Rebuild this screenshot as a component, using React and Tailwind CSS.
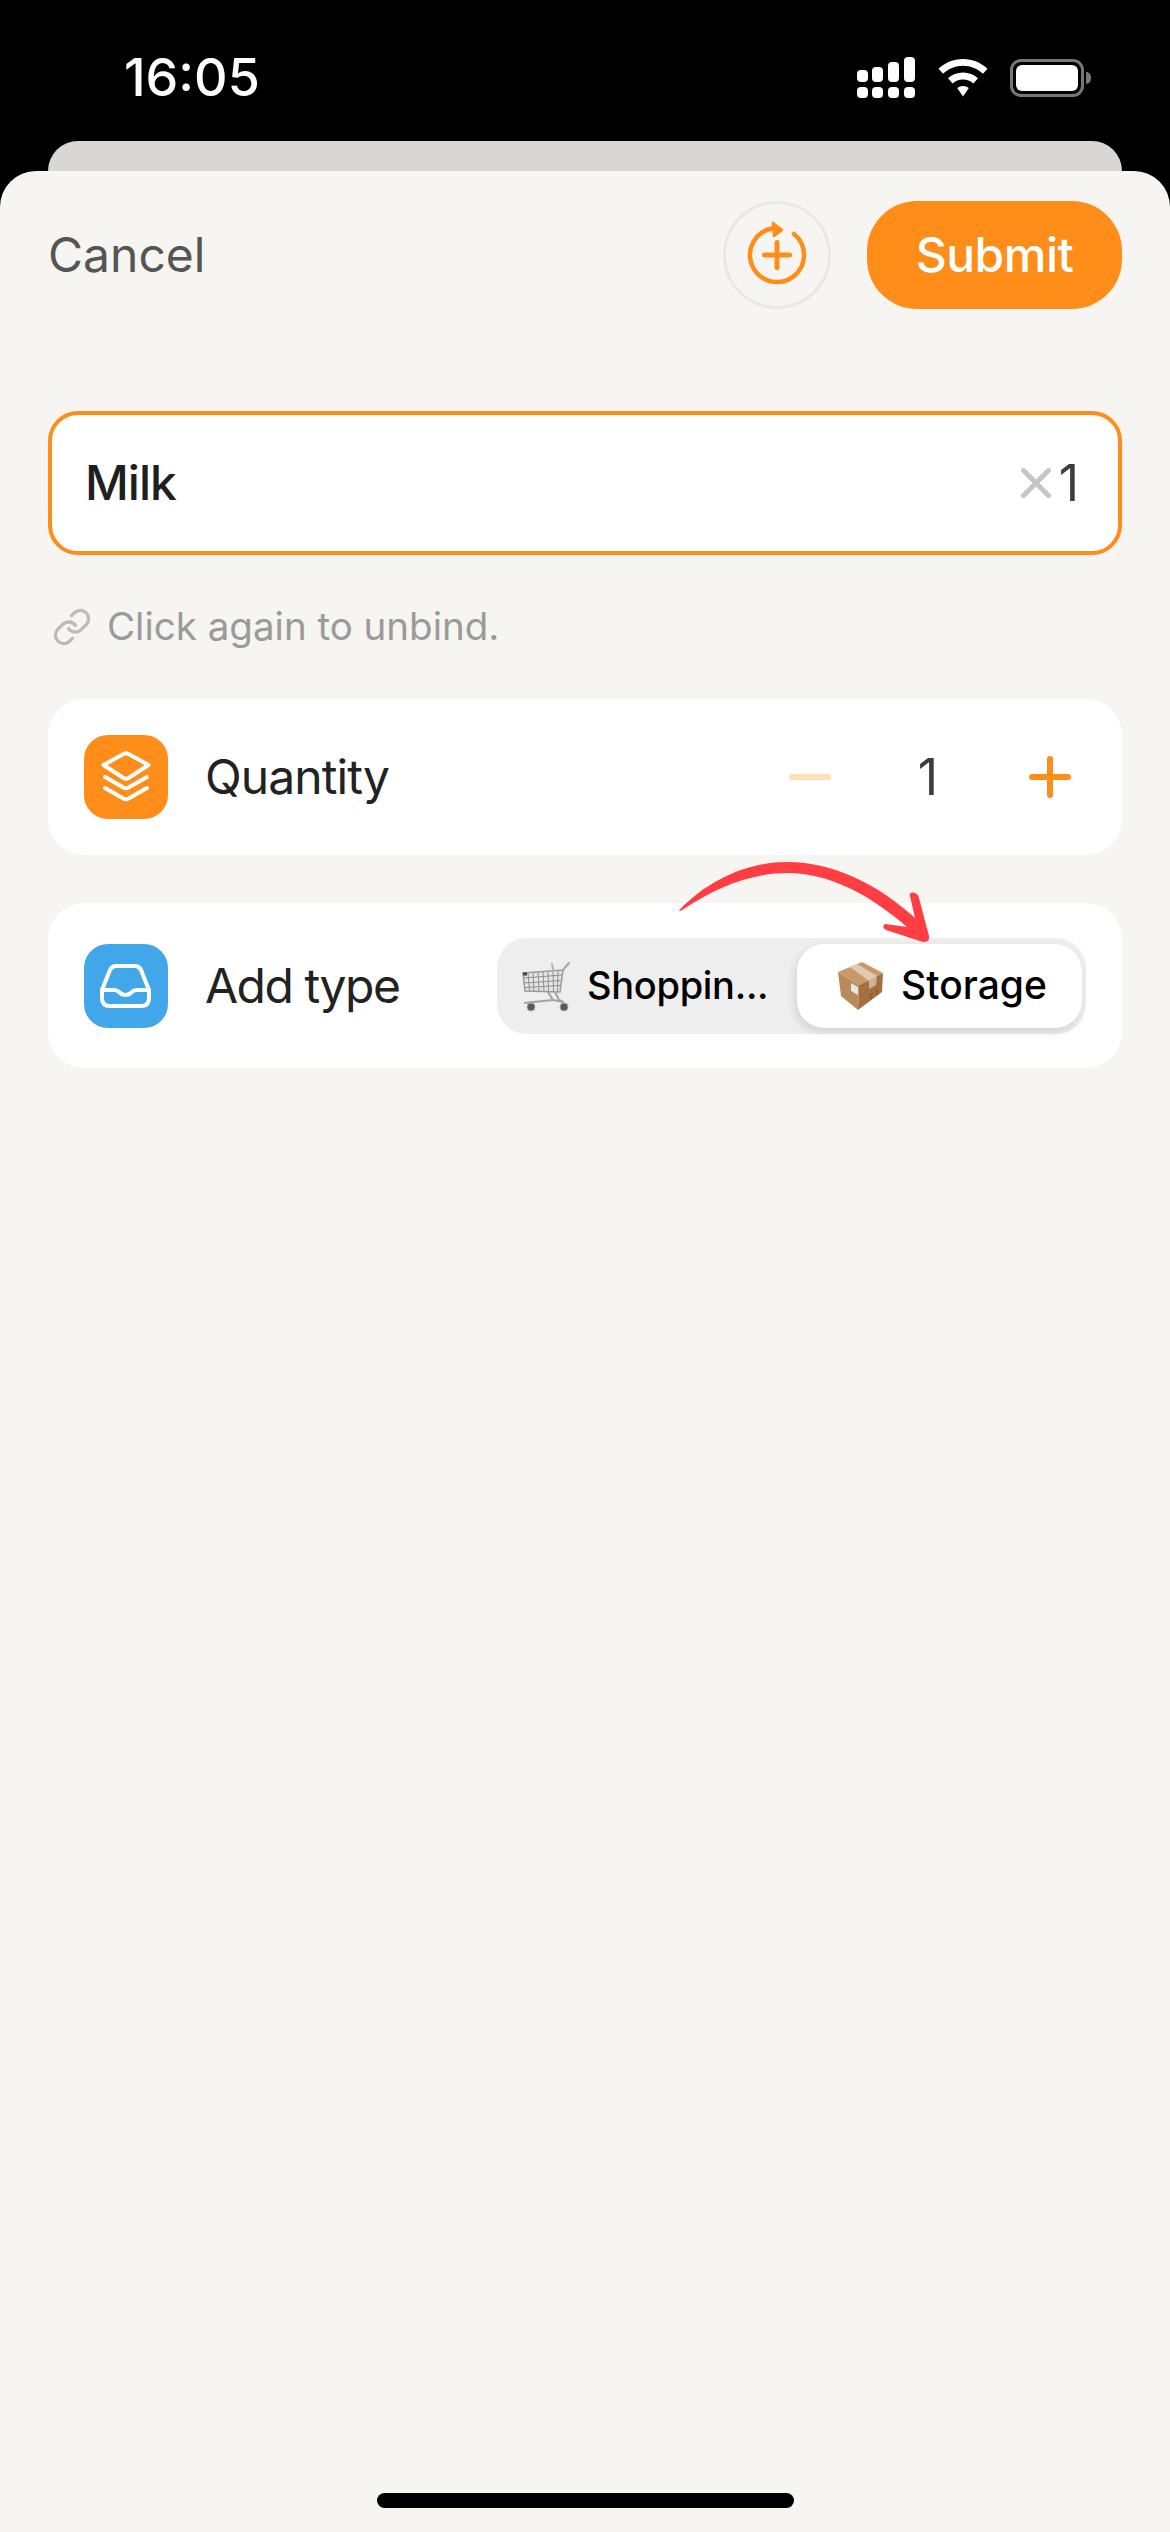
import { Link } from 'lucide-react';

function StatusIcons() {
  return (
    <div className="flex items-center">
      <svg width="58" height="41" viewBox="0 0 58 41" fill="#fff">
        <rect x="0" y="13" width="11" height="12" rx="4" />
        <rect x="15" y="10" width="11" height="15" rx="4" />
        <rect x="31" y="5" width="11" height="20" rx="4" />
        <rect x="47" y="0" width="11" height="25" rx="4" />
        <rect x="0" y="30" width="11" height="11" rx="4" />
        <rect x="15" y="30" width="11" height="11" rx="4" />
        <rect x="31" y="30" width="11" height="11" rx="4" />
        <rect x="47" y="30" width="11" height="11" rx="4" />
      </svg>
      <svg className="ml-[23px]" width="50" height="38" viewBox="0 0 50 38" fill="#fff">
        <path d="M25 0C15.500 0 7 3.600 0.500 9.800L5 14.800C10.300 9.800 17.300 6.700 25 6.700C32.700 6.700 39.700 9.800 45 14.800L49.500 9.800C43 3.600 34.500 0 25 0Z" />
        <path d="M25 13.500C19.200 13.500 14 15.700 10 19.300L14.600 24.400C17.400 22 21 20.500 25 20.500C29 20.500 32.600 22 35.400 24.400L40 19.300C36 15.700 30.800 13.500 25 13.500Z" />
        <path d="M25 27C22.800 27 20.800 27.800 19.200 29.100L25 37.500L30.800 29.100C29.200 27.800 27.200 27 25 27Z" />
      </svg>
      <div className="ml-[22px] flex items-center">
        <div className="w-[74px] h-[38px] rounded-[11px] border-[3px] border-[#777] p-[3px]">
          <div className="w-full h-full rounded-[6px] bg-white" />
        </div>
        <div className="w-[5px] h-[12px] ml-[2px] rounded-r-full bg-[#777]" />
      </div>
    </div>
  );
}

function CartEmoji() {
  return (
    <svg width="50" height="52" viewBox="10 10 50 52" fill="none" className="shrink-0">
      <path d="M13 23L53 20L50 42L15 41Z" fill="#e4e4e4" />
      <g stroke="#8f8f8f" strokeWidth="1">
        <path d="M13 28L52 25M13.500 33L51.500 30.500M14 37.500L50.500 35.500" />
        <path d="M18 23L19.500 41M23 22.500L24 41M28 22L29 41.500M33 22L34 41.500M38 21.500L38.500 42M43 21L43.500 42M48 20.500L47.500 42" />
      </g>
      <path d="M13 23L53 20L50 42L15 41Z" stroke="#9a9a9a" strokeWidth="1.500" />
      <path d="M53 20L59 13" stroke="#a8a8a8" strokeWidth="2" strokeLinecap="round" />
      <path d="M42 14L43.500 21" stroke="#b5b5b5" strokeWidth="2" strokeLinecap="round" />
      <rect x="13" y="22.500" width="4" height="3" fill="#2f4a6b" />
      <path d="M38 42L43 50L14 53M45 42L49 50L53 52L43 50" stroke="#a3a3a3" strokeWidth="2" strokeLinejoin="round" />
      <circle cx="21" cy="57" r="4" fill="#5c5853" stroke="#a8a8a8" strokeWidth="1" />
      <circle cx="54" cy="57" r="4" fill="#5c5853" stroke="#a8a8a8" strokeWidth="1" />
    </svg>
  );
}

function BoxEmoji() {
  return (
    <svg width="50" height="54" viewBox="10 10 50 54" fill="none" className="shrink-0">
      <path d="M13 23L37 13L58 24L34 36Z" fill="#c99a69" />
      <path d="M13 23L34 36L33 61L16 47Z" fill="#bb8a5b" />
      <path d="M34 36L58 24L57 43L33 61Z" fill="#a4703f" />
      <path d="M25 18L32 15L52 27L44 32Z" fill="#e0cbb0" />
      <path d="M44 32L52 27L51 36L44 40Z" fill="#cdb596" />
      <path d="M26 34L33 38L33 46L26 42Z" fill="#e6e6e6" />
      <path d="M44 46L48 44M52 41V46M46 47V50" stroke="#7a4f2a" strokeWidth="1" />
    </svg>
  );
}

export default function App() {
  return (
    <div className="h-[2532px] flex flex-col bg-black font-['Inter',sans-serif]">
      <div className="h-[141px] shrink-0 flex items-center justify-between pl-[124px] pr-[79px] pt-[14px]">
        <span className="text-[52px] font-medium text-white">16:05</span>
        <StatusIcons />
      </div>
      <div className="h-[30px] shrink-0 mx-[48px] rounded-t-[30px] bg-[#d8d7d4]" />

      <div className="flex-1 flex flex-col rounded-t-[36px] bg-[#f6f5f1] px-[48px] pt-[30px]">
        <div className="flex items-center justify-between">
          <span className="text-[48px] text-[#555553]">Cancel</span>
          <div className="flex items-center gap-[36px]">
            <button className="w-[108px] h-[108px] flex items-center justify-center rounded-full border-[3px] border-[#e8e8e8]">
              <svg width="72" height="72" viewBox="0 0 72 72" fill="none" stroke="#ff8d1a" strokeLinecap="round" strokeLinejoin="round">
                <path d="M53 15A27 27 0 1 1 32 9.300" strokeWidth="4.500" />
                <path d="M32 4L41 11L33 17Z" fill="#ff8d1a" strokeWidth="2.500" />
                <path d="M36 23.500V48.500M23.500 36H48.500" strokeWidth="5" />
              </svg>
            </button>
            <button className="w-[255px] h-[108px] rounded-[50px] bg-[#ff8d1a] text-[48px] font-medium tracking-[-0.5px] text-white">Submit</button>
          </div>
        </div>

        <div className="mt-[102px] h-[144px] flex items-center rounded-[30px] border-4 border-[#ff8d1a] bg-white pl-[33px] pr-[39px]">
          <span className="flex-1 text-[48px] font-medium tracking-[-1px] text-[#1f1f1f]">Milk</span>
          <svg width="30" height="30" viewBox="0 0 30 30" stroke="#c6c6c6" strokeWidth="5" strokeLinecap="round">
            <path d="M2.500 2.500L27.500 27.500M27.500 2.500L2.500 27.500" />
          </svg>
          <span className="ml-[8px] text-[50px] text-[#3d3d3d]">1</span>
        </div>

        <div className="h-[144px] flex items-center pl-[4px]">
          <Link className="w-[40px] h-[40px] text-[#bbbbbb]" strokeWidth={2} />
          <span className="ml-[15px] text-[38.500px] text-[#9a9a98]">Click again to unbind.</span>
        </div>

        <div className="h-[156px] flex items-center rounded-[36px] bg-white pl-[36px] pr-[36px]">
          <div className="w-[84px] h-[84px] rounded-[24px] bg-[#ff8d1a]">
            <svg width="84" height="84" viewBox="0 0 84 84" fill="none" stroke="#fff" strokeWidth="4" strokeLinecap="round" strokeLinejoin="round">
              <path d="M19.500 30L39.500 19Q42 17.700 44.500 19L64.500 30L44.500 43Q42 44.300 39.500 43Z" />
              <path d="M21 42L39.500 52.500Q42 53.800 44.500 52.500L63 42" />
              <path d="M21 53L39.500 63.500Q42 64.800 44.500 63.500L63 53" />
            </svg>
          </div>
          <span className="ml-[37px] flex-1 text-[48px] tracking-[-0.9px] text-[#222222]">Quantity</span>
          <svg width="72" height="72" viewBox="0 0 72 72" stroke="#ffdfb5" strokeWidth="6" strokeLinecap="round">
            <path d="M18 36H54" />
          </svg>
          <span className="w-[168px] pr-[4px] text-center text-[50px] text-[#3d3d3d]">1</span>
          <svg width="72" height="72" viewBox="0 0 72 72" stroke="#ff8d1a" strokeWidth="6" strokeLinecap="round">
            <path d="M18 36H54M36 18V54" />
          </svg>
        </div>

        <div className="relative mt-[48px] h-[165px] flex items-center rounded-[36px] bg-white pl-[36px] pr-[36px]">
          <div className="w-[84px] h-[84px] rounded-[24px] bg-[#42a6ea]">
            <svg width="84" height="84" viewBox="0 0 84 84" fill="none" stroke="#fff" strokeWidth="4" strokeLinecap="round" strokeLinejoin="round">
              <path d="M18 46L26 26Q28 22 32 22H51Q55 22 57 26L65 46V54Q65 62 57 62H26Q18 62 18 54Z" />
              <path d="M18 46H30Q33 46 35 48Q38 51 41.500 51Q45 51 48 48Q50 46 53 46H65" />
            </svg>
          </div>
          <span className="ml-[37px] flex-1 text-[48px] tracking-[-1.500px] text-[#222222]">Add type</span>
          <div className="w-[589px] h-[96px] flex items-center rounded-[30px] bg-[#eeeeee] pr-[4px]">
            <div className="flex-1 flex items-center pl-[23px] gap-[17px]">
              <CartEmoji />
              <span className="text-[38px] font-medium tracking-[-0.3px] text-black">Shoppin...</span>
            </div>
            <div className="w-[285px] h-[84px] flex items-center justify-center gap-[16px] pl-[3px] rounded-[27px] bg-white shadow-[-2px_4px_8px_rgba(0,0,0,0.12)]">
              <BoxEmoji />
              <span className="text-[39px] font-medium text-black">Storage</span>
            </div>
          </div>

          {/* hand drawn arrow sits over the card edge */}
          <svg className="absolute left-[622px] top-[-53px]" width="270" height="100" viewBox="0 0 270 100" fill="#ff3d42">
            <path d="M9.500 60C40 28 80 12 117 12C165 12 210 36 245 68L240 46Q239 41 245 43Q248 44 249 48L259 86Q260 92 253 92L216 80Q211 77 215 74L237 77C200 45 160 23 117 23C80 23 45 38 12 60Q8 62 9.500 60Z" />
          </svg>
        </div>

        <div className="mt-auto mb-[24px] mx-auto w-[417px] h-[15px] rounded-full bg-black" />
      </div>
    </div>
  );
}
